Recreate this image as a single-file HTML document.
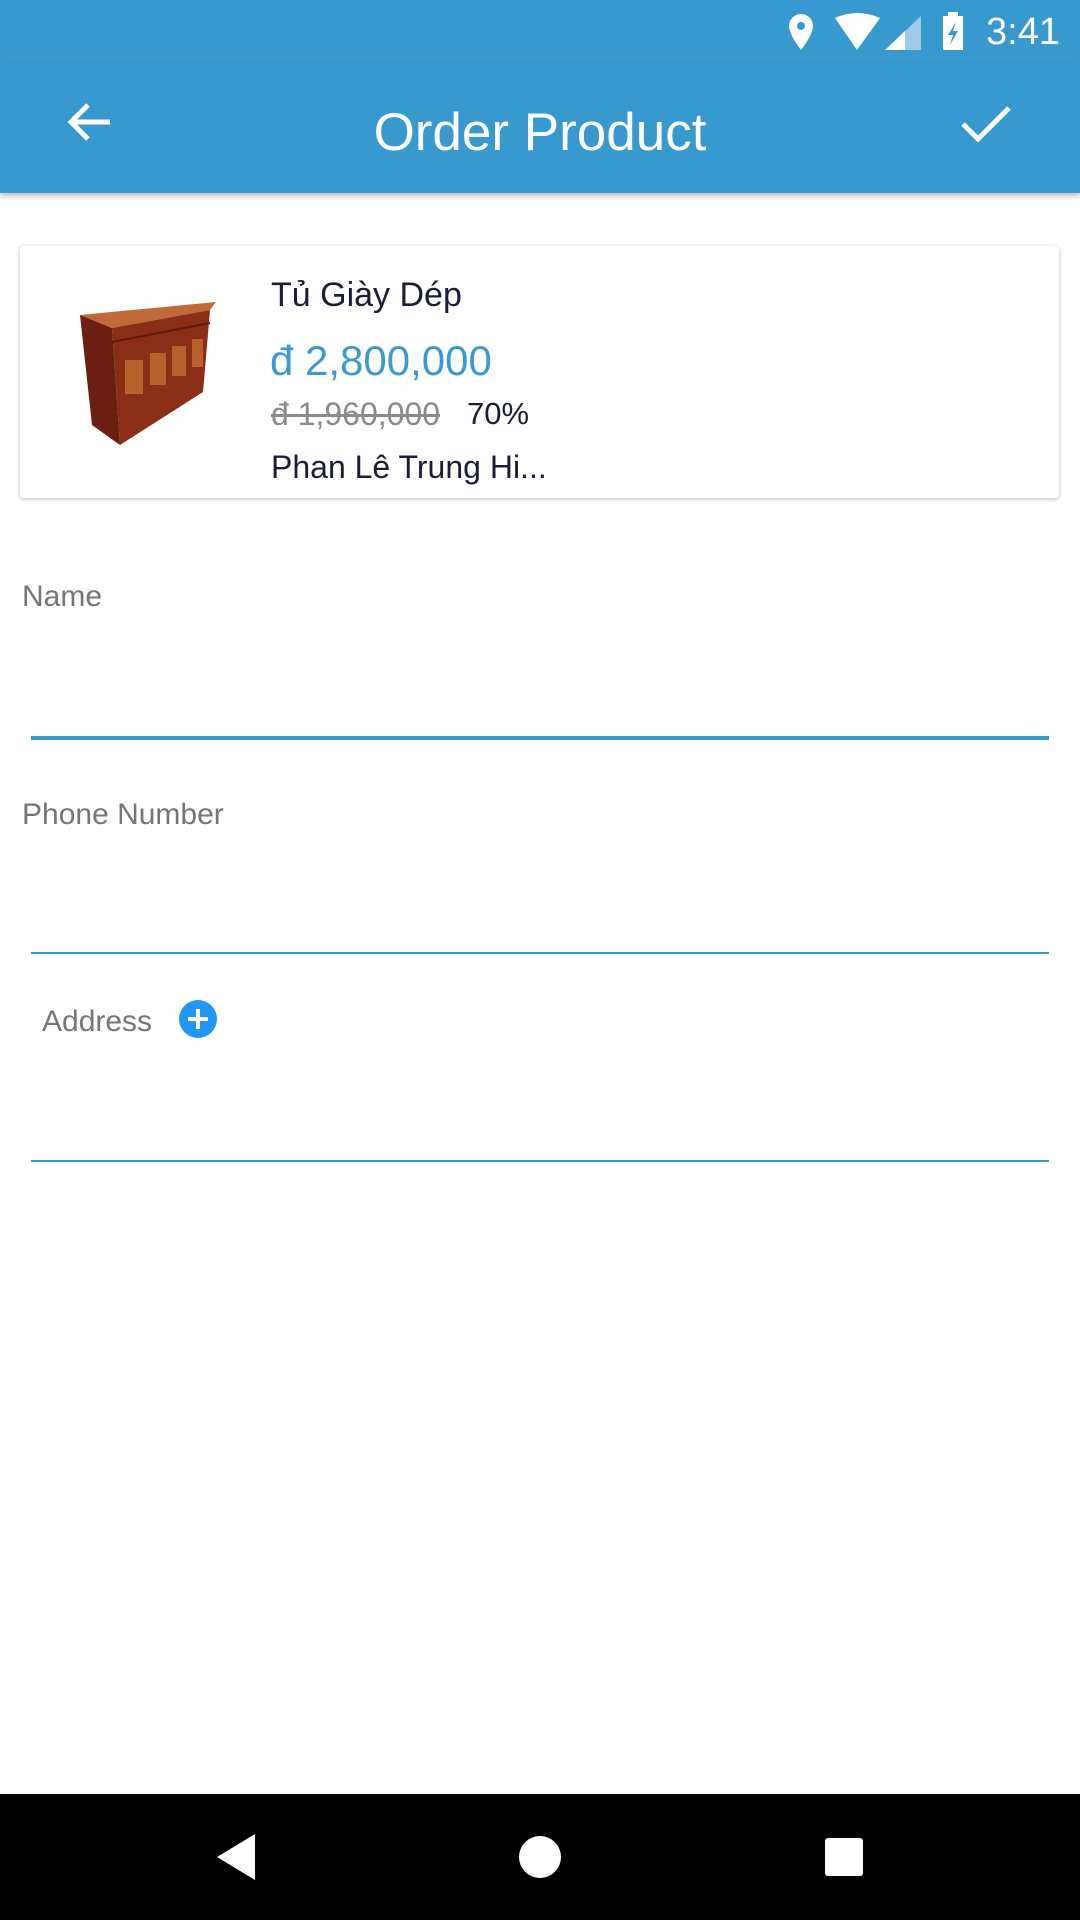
<!DOCTYPE html>
<html><head><meta charset="utf-8"><style>
*{margin:0;padding:0;box-sizing:border-box}
body{width:1080px;height:1920px;background:#fff;position:relative;overflow:hidden;font-family:"Liberation Sans",sans-serif}
.abs{position:absolute}
.t{position:absolute;white-space:nowrap;line-height:1}
</style></head><body>
<div class="abs" style="left:0;top:0;width:1080px;height:63px;background:#3799cd"></div>
<div class="abs" style="left:0;top:63px;width:1080px;height:130px;background:#3799cd;box-shadow:0 3px 5px rgba(0,0,0,.25)"></div>
<svg class="abs" style="left:780px;top:10px" width="300" height="44" viewBox="0 0 300 44">
<path d="M21 4a12 12 0 0 0-12 12c0 9 12 24 12 24s12-15 12-24A12 12 0 0 0 21 4z" fill="#fff"/><circle cx="21" cy="16" r="4" fill="#3799cd"/>
<path d="M55 8 Q77 -2 100 8 L77 40z" fill="#fff"/>
<path d="M105 40 L141 6 L141 40z" fill="#9fcbe6"/><path d="M105 40 L125 21 L125 40z" fill="#fff"/>
<rect x="163" y="6" width="20" height="34" fill="#fff"/><rect x="168" y="2" width="10" height="5" fill="#fff"/>
<path d="M176 12 L168 25 L173 25 L170 35 L178 21 L173 21z" fill="#3799cd"/>
</svg>
<div class="t" style="left:986px;top:13px;font-size:38px;color:#fff">3:41</div>
<svg class="abs" style="left:66px;top:100px" width="48" height="44" viewBox="0 0 48 44"><path d="M44 22H6M22 5L5 22l17 17" stroke="#fff" stroke-width="5" fill="none"/></svg>
<div class="t" style="left:0;width:1080px;text-align:center;top:106px;font-size:53px;color:#fff">Order Product</div>
<svg class="abs" style="left:960px;top:104px" width="52" height="40" viewBox="0 0 52 40"><path d="M3 20l15 15L49 4" stroke="#fff" stroke-width="5" fill="none"/></svg>
<div class="abs" style="left:20px;top:246px;width:1039px;height:252px;border-radius:4px;box-shadow:0 1px 4px rgba(0,0,0,.3);background:#fff"></div>
<svg class="abs" style="left:55px;top:290px" width="200" height="170" viewBox="55 290 200 170">
<polygon points="80,315 216,302 210,310 112,328" fill="#c06a3a"/>
<polygon points="80,315 112,328 120,445 92,425" fill="#6a1f10"/>
<polygon points="112,328 210,310 203,392 120,445" fill="#8a2e18"/>
<g fill="#b8612c"><rect x="125" y="360" width="18" height="34"/><rect x="150" y="353" width="16" height="32"/><rect x="172" y="346" width="14" height="30"/><rect x="192" y="339" width="11" height="28"/></g>
<line x1="112" y1="342" x2="210" y2="323" stroke="#5a1a0c" stroke-width="2"/>
</svg>
<div class="t" style="left:271px;top:278px;font-size:34px;color:#1b1b3a">Tủ Giày Dép</div>
<div class="t" style="left:270px;top:340px;font-size:42px;color:#3a9ad0">đ 2,800,000</div>
<div class="t" style="left:271px;top:398px;font-size:32px;color:#8a8a8a;text-decoration:line-through">đ 1,960,000 </div>
<div class="t" style="left:467px;top:398px;font-size:31px;color:#1b1b3a">70%</div>
<div class="t" style="left:271px;top:451px;font-size:32px;color:#1b1b3a">Phan Lê Trung Hi...</div>
<div class="t" style="left:22px;top:582px;font-size:30px;color:#757575">Name</div>
<div class="abs" style="left:31px;top:736px;width:1018px;height:4px;background:#3799cd"></div>
<div class="t" style="left:22px;top:800px;font-size:30px;color:#757575">Phone Number</div>
<div class="abs" style="left:31px;top:952px;width:1018px;height:2px;background:#3799cd"></div>
<div class="t" style="left:42px;top:1007px;font-size:30px;color:#757575">Address</div>
<svg class="abs" style="left:179px;top:1000px" width="38" height="38" viewBox="0 0 38 38"><circle cx="19" cy="19" r="19" fill="#2196f3"/><path d="M19 9v20M9 19h20" stroke="#fff" stroke-width="4"/></svg>
<div class="abs" style="left:31px;top:1160px;width:1018px;height:2px;background:#3799cd"></div>
<div class="abs" style="left:0;top:1794px;width:1080px;height:126px;background:#000"></div>
<svg class="abs" style="left:0;top:1794px" width="1080" height="126">
<polygon points="255,40 255,86 217,63" fill="#fff"/>
<circle cx="540" cy="63" r="21" fill="#fff"/>
<rect x="825" y="44" width="38" height="38" rx="3" fill="#fff"/>
</svg>
</body></html>
